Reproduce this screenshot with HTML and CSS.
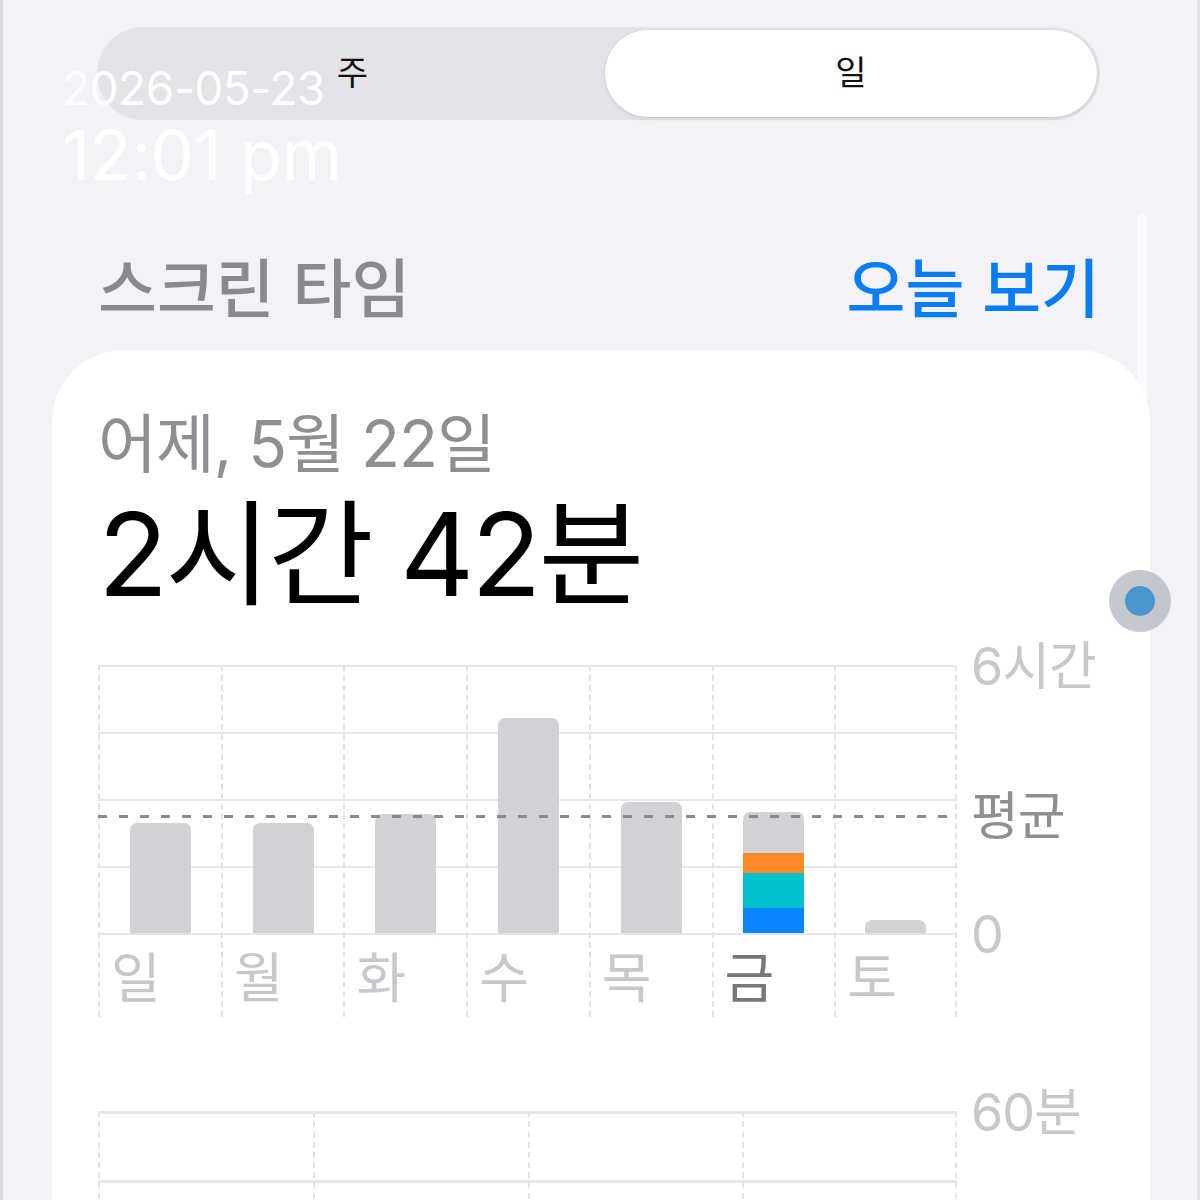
FILE: index.html
```html
<!DOCTYPE html>
<html lang="ko">
<head>
  <meta charset="UTF-8" />
  <meta name="viewport" content="width=device-width, initial-scale=1.0"/>
  <title>스크린 타임</title>
  <link rel="stylesheet" href="styles.css">
</head>
<body>

  <div class="screen">
    <div class="segmented">
      <div class="segment">주</div>
      <div class="segment active">일</div>
    </div>

    <div class="stamp">
      <div class="stamp-date">2026-05-23</div>
      <div class="stamp-time">12:01 pm</div>
    </div>

    <div class="header">
      <h2>스크린 타임</h2>
      <a class="today-link">오늘 보기</a>
    </div>

    <div class="card">
      <p class="card-date">어제, 5월 22일</p>
      <h1 class="total">2시간 42분</h1>

      <!-- weekly chart -->
      <div class="chart">
        <div class="week">
          <div class="hlines"></div>
          <div class="avg-line"></div>
          <div class="day"><div class="bar-area"><div class="bar" style="height:110px"></div></div><span>일</span></div>
          <div class="day"><div class="bar-area"><div class="bar" style="height:110px"></div></div><span>월</span></div>
          <div class="day"><div class="bar-area"><div class="bar" style="height:119px"></div></div><span>화</span></div>
          <div class="day"><div class="bar-area"><div class="bar" style="height:215px"></div></div><span>수</span></div>
          <div class="day"><div class="bar-area"><div class="bar" style="height:131px"></div></div><span>목</span></div>
          <div class="day current">
            <div class="bar-area">
              <div class="bar stacked" style="height:121px">
                <div class="seg orange" style="height:20px"></div>
                <div class="seg teal" style="height:35px"></div>
                <div class="seg blue" style="height:25px"></div>
              </div>
            </div>
            <span>금</span>
          </div>
          <div class="day last"><div class="bar-area"><div class="bar" style="height:13px"></div></div><span>토</span></div>
        </div>
        <div class="axis">
          <span class="tick-top">6시간</span>
          <span class="tick-avg">평균</span>
          <span class="tick-zero">0</span>
        </div>
      </div>

      <!-- hourly chart -->
      <div class="chart hourly">
        <div class="hours">
          <div class="hlines"></div>
          <div class="quarter"></div>
          <div class="quarter"></div>
          <div class="quarter"></div>
          <div class="quarter last"></div>
        </div>
        <div class="axis">
          <span class="tick-top">60분</span>
        </div>
      </div>
    </div>

    <div class="scroll-track"></div>
    <div class="scroll-dot"><div class="scroll-dot-inner"></div></div>
  </div>

</body>
</html>
```

FILE: styles.css
```css
body {
  margin: 0;
  padding: 0;
  background-color: #f2f2f7;
  font-family: Inter, "Noto Sans CJK KR", sans-serif;
  overflow: hidden;
}

.screen {
  position: relative;
  width: 1200px;
  height: 1200px;
  box-sizing: border-box;
  border-left: 3px solid #d9d9de;
  border-right: 3px solid #e2e2e7;
  padding-top: 27px;
  overflow: hidden;
}

/* segmented control */
.segmented {
  display: grid;
  grid-template-columns: 1fr 492px;
  margin: 0 97px 0 94px;
  height: 93px;
  padding: 3px;
  box-sizing: border-box;
  background: #e3e3e8;
  border-radius: 47px;
}

.segment {
  display: flex;
  align-items: center;
  justify-content: center;
  padding-bottom: 6px;
  font-family: "Noto Sans CJK KR", sans-serif;
  font-size: 34px;
  color: #111;
}

.active {
  background: white;
  border-radius: 44px;
  box-shadow: 0 2px 4px rgba(0, 0, 0, 0.08), 0 0 0 1px rgba(0, 0, 0, 0.03);
}

/* overlay timestamp */
.stamp {
  position: absolute;
  left: 59px;
  top: 60px;
  color: rgba(255, 255, 255, 0.95);
  font-family: Inter, sans-serif;
}

.stamp-date {
  font-size: 46px;
  line-height: 56px;
  letter-spacing: -0.5px;
}

.stamp-time {
  font-size: 69px;
  line-height: 78px;
  letter-spacing: -0.5px;
}

/* header */
.header {
  display: flex;
  justify-content: space-between;
  align-items: center;
  margin: 124px 97px 0 95px;
  height: 80px;
}

.header h2 {
  margin: 0;
  font-family: "Noto Sans CJK KR", sans-serif;
  font-weight: 500;
  font-size: 64px;
  color: #8a8a8e;
}

.today-link {
  font-family: "Noto Sans CJK KR", sans-serif;
  font-weight: 500;
  font-size: 64px;
  color: #0a7cf6;
}

/* card */
.card {
  margin: 26px 47px 0 49px;
  height: 900px;
  background: white;
  border-radius: 72px;
  padding: 54px 46px 0 46px;
}

.card-date {
  margin: 0;
  font-size: 64px;
  line-height: 80px;
  letter-spacing: -1px;
  color: #8e8e93;
}

.total {
  margin: 9px 0 0 0;
  font-size: 115px;
  line-height: 124px;
  font-weight: 400;
  letter-spacing: -3px;
  color: #000;
}

/* charts */
.chart {
  display: flex;
  margin-top: 48px;
}

.week {
  position: relative;
  display: grid;
  grid-template-columns: repeat(7, 1fr);
  width: 859px;
}

.hlines {
  position: absolute;
  left: 0;
  right: 0;
  top: 0;
  height: 270px;
  background: repeating-linear-gradient(to bottom, #e6e6ea 0 2px, transparent 2px 67px);
}

.avg-line {
  position: absolute;
  left: 0;
  right: 0;
  top: 150px;
  height: 3px;
  background: repeating-linear-gradient(to right, #8a8a8e 0 9px, transparent 9px 21px);
  z-index: 2;
}

.day {
  border-left: 2px dashed #e3e3e7;
  display: flex;
  flex-direction: column;
}

.day.last {
  border-right: 2px dashed #e3e3e7;
}

.bar-area {
  position: relative;
  height: 268px;
  display: flex;
  align-items: flex-end;
  justify-content: center;
}

.bar {
  width: 61px;
  background: #d1d1d6;
  border-radius: 7px 7px 0 0;
  display: flex;
  flex-direction: column;
  justify-content: flex-end;
  overflow: hidden;
}

.seg.orange {
  background: #fd8a28;
}

.seg.teal {
  background: #00c1cb;
}

.seg.blue {
  background: #0a84ff;
}

.day span {
  font-family: "Noto Sans CJK KR", sans-serif;
  font-size: 54px;
  line-height: 84px;
  padding-left: 11px;
  color: #c7c7cc;
}

.day.current span {
  color: #76767b;
}

.axis {
  position: relative;
  flex: 1;
  font-size: 52px;
  color: #c7c7cc;
}

.axis span {
  position: absolute;
  left: 14px;
  line-height: 60px;
  letter-spacing: -1px;
}

.tick-top {
  top: -28px;
}

.tick-avg {
  top: 122px;
  color: #8e8e93;
}

.tick-zero {
  top: 240px;
}

.chart.hourly {
  margin-top: 94px;
}

.hours {
  position: relative;
  display: grid;
  grid-template-columns: repeat(4, 1fr);
  width: 859px;
  height: 200px;
}

.hours .hlines {
  height: 200px;
  background: repeating-linear-gradient(to bottom, #e6e6ea 0 3px, transparent 3px 69px);
}

.quarter {
  border-left: 2px dashed #e3e3e7;
}

.quarter.last {
  border-right: 2px dashed #e3e3e7;
}

/* scroll indicator */
.scroll-track {
  position: absolute;
  left: 1134px;
  top: 213px;
  width: 10px;
  height: 1000px;
  border-radius: 5px;
  background: rgba(255, 255, 255, 0.6);
}

.scroll-dot {
  position: absolute;
  left: 1106px;
  top: 570px;
  width: 62px;
  height: 62px;
  border-radius: 50%;
  background: rgba(186, 192, 200, 0.85);
  display: flex;
  align-items: center;
  justify-content: center;
}

.scroll-dot-inner {
  width: 30px;
  height: 30px;
  border-radius: 50%;
  background: #4b95cd;
}
```
